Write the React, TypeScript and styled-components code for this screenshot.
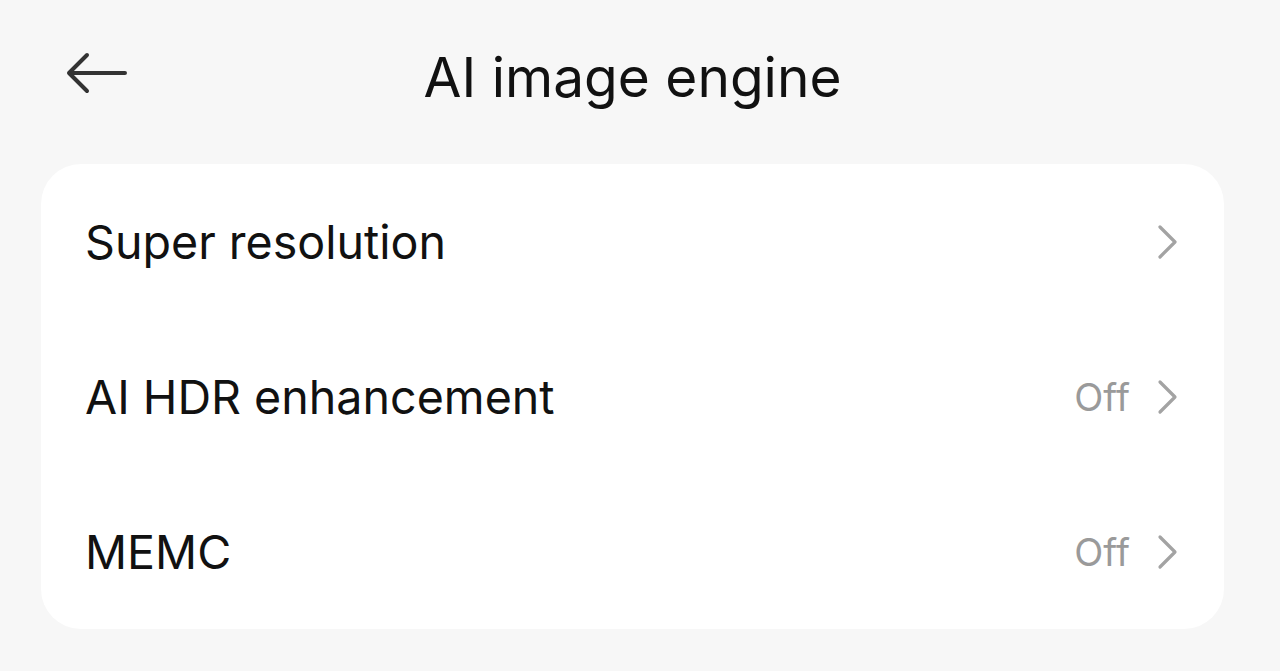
import React from "react";
import styled, { createGlobalStyle } from "styled-components";

const Global = createGlobalStyle`
  html, body { margin: 0; padding: 0; background: #f7f7f7; }
  body { font-family: Inter, "Noto Sans", sans-serif; }
`;

const Page = styled.div`
  width: 1280px;
  height: 671px;
  background: #f7f7f7;
  box-sizing: border-box;
  padding: 0 56px 0 41px;
  display: flex;
  flex-direction: column;
`;

const Header = styled.header`
  height: 154px;
  display: grid;
  grid-template-columns: 100px 1fr 100px;
  align-items: center;
`;

const Back = styled.button`
  border: 0;
  background: none;
  padding: 0 0 0 24px;
  display: flex;
  align-items: center;
  cursor: pointer;
  margin-top: -8px;
`;

const Title = styled.h1`
  margin: 0;
  text-align: center;
  font-weight: 400;
  font-size: 55px;
  color: #111;
  letter-spacing: 0;
`;

const Card = styled.div`
  margin-top: 10px;
  background: #fff;
  border-radius: 40px;
  display: flex;
  flex-direction: column;
`;

const Row = styled.div`
  height: 155px;
  display: flex;
  align-items: center;
  padding: 0 44px 0 44px;
`;

const Label = styled.span`
  flex: 1;
  font-size: 46.6px;
  color: #111;
`;

const Value = styled.span`
  font-size: 38px;
  color: #9a9a9a;
  margin-right: 26px;
`;

const Chevron = () => (
  <svg width="24" height="36" viewBox="0 0 24 36" fill="none">
    <path d="M4 3 L19 18 L4 33" stroke="#a3a3a3" strokeWidth="3.2" strokeLinecap="round" strokeLinejoin="round" />
  </svg>
);

const BackArrow = () => (
  <svg width="64" height="44" viewBox="0 0 64 44" fill="none">
    <path d="M60 22 H4 M22 4 L4 22 L22 40" stroke="#333" strokeWidth="4" strokeLinecap="round" strokeLinejoin="round" />
  </svg>
);

const rows = [
  { label: "Super resolution" },
  { label: "AI HDR enhancement", value: "Off" },
  { label: "MEMC", value: "Off" },
];

export default function App() {
  return (
    <>
      <Global />
      <Page>
        <Header>
          <Back aria-label="Back"><BackArrow /></Back>
          <Title>AI image engine</Title>
          <div />
        </Header>
        <Card>
          {rows.map((r) => (
            <Row key={r.label}>
              <Label>{r.label}</Label>
              {r.value && <Value>{r.value}</Value>}
              <Chevron />
            </Row>
          ))}
        </Card>
      </Page>
    </>
  );
}
